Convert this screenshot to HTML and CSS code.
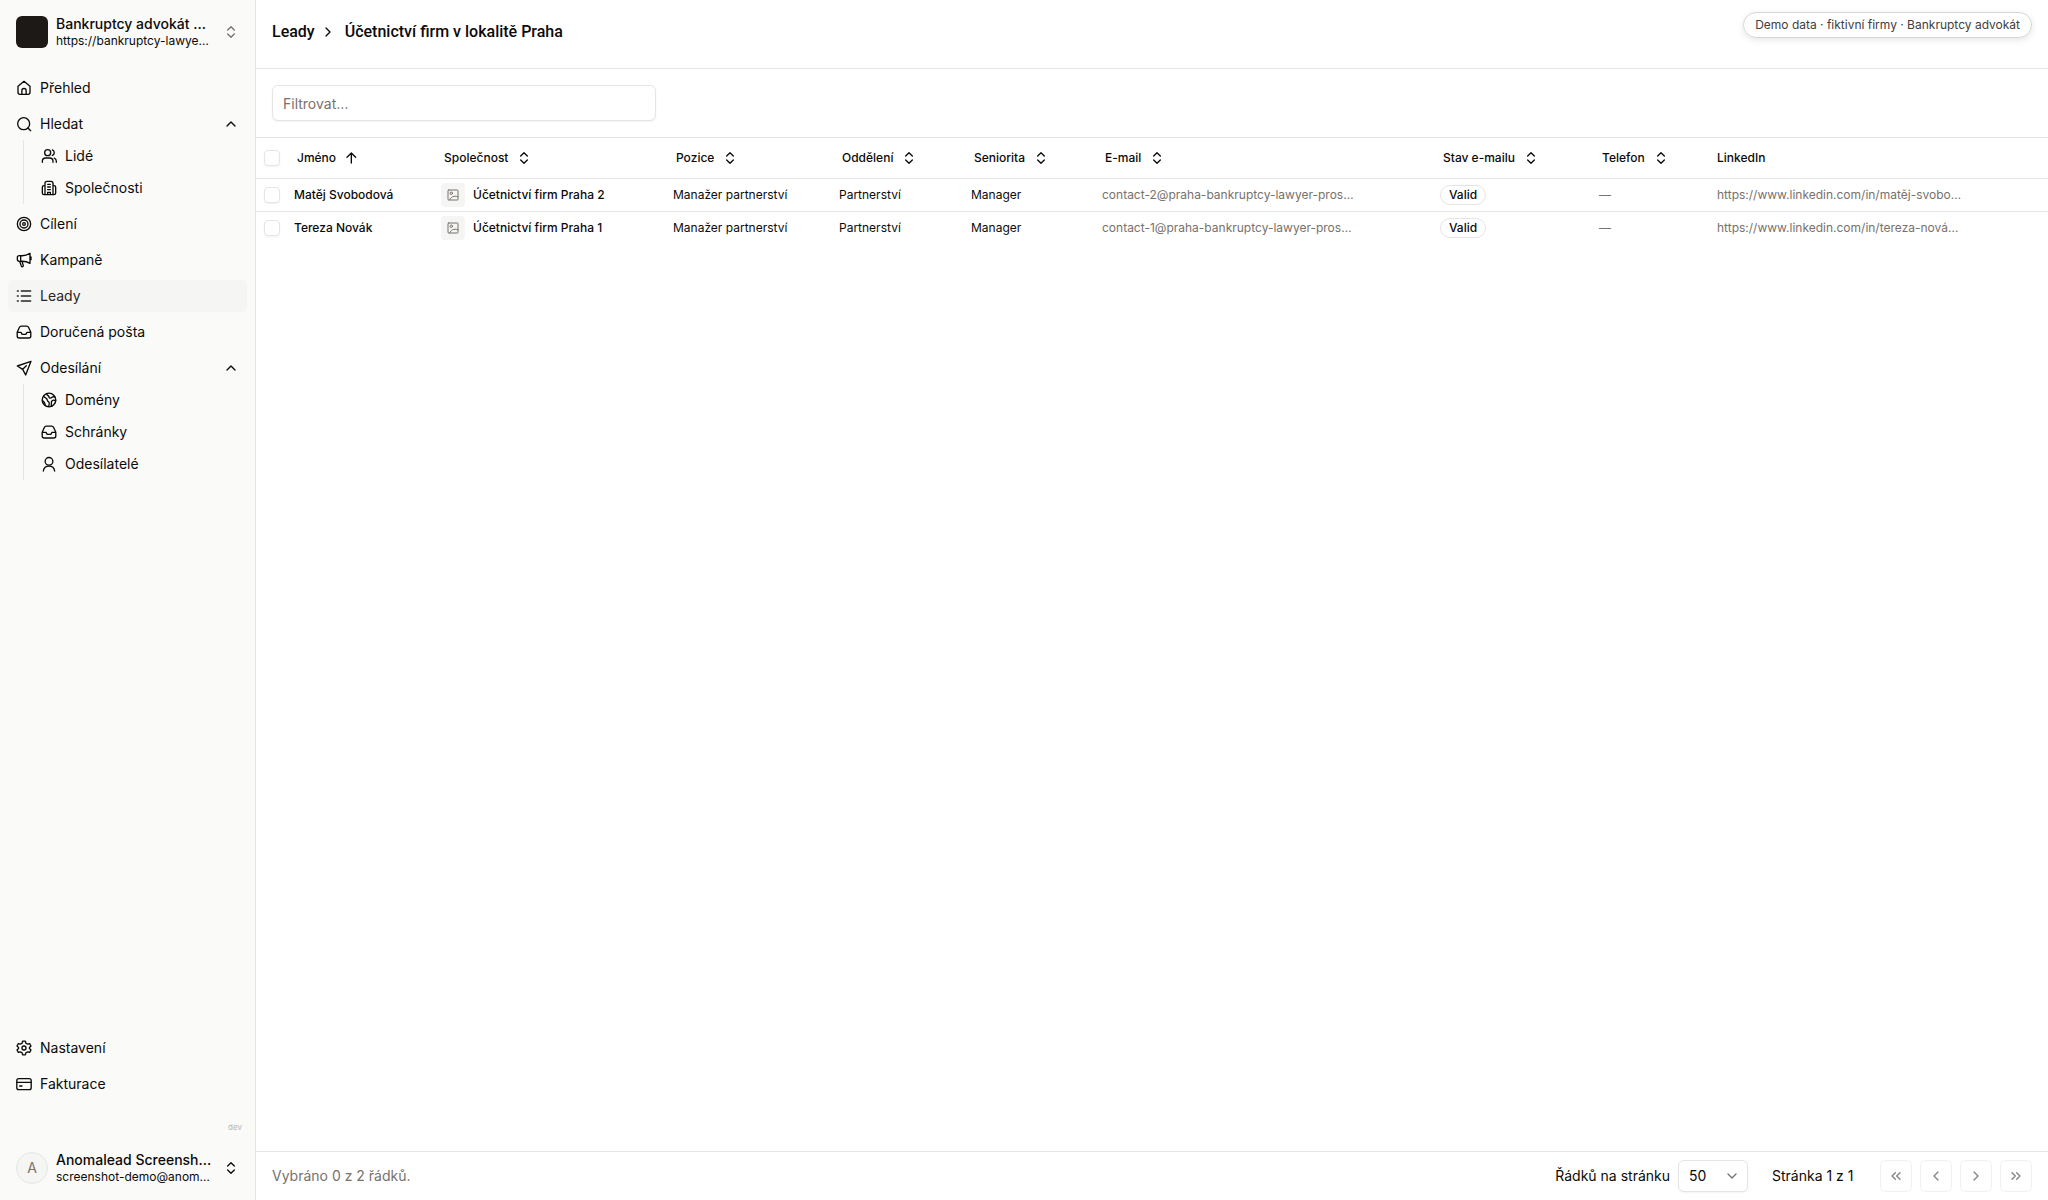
FILE: index.html
```html
<!DOCTYPE html>
<html lang="cs">
<head>
<meta charset="utf-8">
<meta name="viewport" content="width=device-width, initial-scale=1">
<title>Leady</title>
<link rel="stylesheet" href="styles.css">
</head>
<body>
<svg class="sprite" aria-hidden="true">
  <symbol id="home" viewBox="0 0 24 24"><path d="M3 9.500 12 2l9 7.500V18.500a3 3 0 0 1-3 3H6a3 3 0 0 1-3-3zM8.800 21.500V16a3.200 3.200 0 0 1 6.400 0v5.500"/></symbol>
  <symbol id="search" viewBox="0 0 24 24"><circle cx="11.500" cy="11.500" r="9"/><path d="m18 18 4 4"/></symbol>
  <symbol id="people" viewBox="0 0 24 24"><circle cx="10" cy="7" r="4.500"/><path d="M2 21.500v-1.500a5 5 0 0 1 5-5h6a5 5 0 0 1 5 5v1.500M17 2.800a4.500 4.500 0 0 1 0 8.400M20 15.200a5 5 0 0 1 3 4.600v1.700"/></symbol>
  <symbol id="company" viewBox="0 0 24 24"><path d="M6 22V5a3 3 0 0 1 3-3h6a3 3 0 0 1 3 3v17M6 8.500H4.500A2.500 2.500 0 0 0 2 11v8.500A2.500 2.500 0 0 0 4.500 22h15a2.500 2.500 0 0 0 2.500-2.500V11a2.500 2.500 0 0 0-2.500-2.500H18M10 6.500h4M10 10.500h4M10 14.500h4M10 22v-3.500h4V22"/></symbol>
  <symbol id="target" viewBox="0 0 24 24"><circle cx="12" cy="12" r="10"/><circle cx="12" cy="12" r="6"/><circle cx="12" cy="12" r="2"/></symbol>
  <symbol id="megaphone" viewBox="0 0 24 24"><path d="M7 5.500c5 .5 10-1 14-3.500v15c-4-2.500-9-3.500-14-3H5a3 3 0 0 1-3-3V8.500a3 3 0 0 1 3-3zM7 5.500V14M5.500 14l2.500 7c.4 1 1.200 1.300 2 1s1.200-1 .9-2L9 14M22.500 7.500v4"/></symbol>
  <symbol id="list" viewBox="0 0 24 24"><path d="M8 4.500h14M8 12h14M8 19.500h14M2 4.500h1.500M2 12h1.500M2 19.500h1.500"/></symbol>
  <symbol id="inbox" viewBox="0 0 24 24"><path d="M1.800 12.500 5.200 5a3 3 0 0 1 2.700-1.700h8.200A3 3 0 0 1 18.800 5l3.400 7.500V18a3 3 0 0 1-3 3H4.800a3 3 0 0 1-3-3zM2 12.500h5.500l1.800 3h5.400l1.800-3H22"/></symbol>
  <symbol id="send" viewBox="0 0 24 24"><path d="M22.500 2 2 9l8 5 4.500 8.500zM10 14l5.500-5.500"/></symbol>
  <symbol id="globe" viewBox="0 0 24 24"><circle cx="12" cy="12" r="10.200"/><path d="M4 6c1 3 3 2.500 4.500 4s.5 3.500 2.500 4.500 1.500 4 .5 7M8.500 2.500c0 2.500 3 2.500 3.500 5s3 2 4.500.5 2.500-1 4-.5M22 13c-2-1-5-1-6 1s0 2.500-.5 4.500.5 2.500 1 2.500M2 13.500c2 0 2.500 1 3.500 3S6 20 6 20"/></symbol>
  <symbol id="person" viewBox="0 0 24 24"><circle cx="12" cy="8" r="5.800"/><path d="M3.500 22.500a8.600 8.600 0 0 1 17 0"/></symbol>
  <symbol id="gear" viewBox="0 0 24 24"><path d="M10 1.800h4l.9 3.100 2.500 1.400 3.100-.8 2 3.500-2.300 2.200v1.600l2.300 2.200-2 3.500-3.100-.8-2.500 1.400-.9 3.100h-4l-.9-3.100-2.500-1.400-3.100.8-2-3.500 2.300-2.200v-1.600L1.500 9l2-3.500 3.100.8 2.500-1.400z"/><circle cx="12" cy="12" r="3"/></symbol>
  <symbol id="card" viewBox="0 0 24 24"><rect x="1.200" y="4" width="21.600" height="16.500" rx="3"/><path d="M1.500 9.500h21M5.500 15H9"/></symbol>
  <symbol id="up" viewBox="0 0 24 24"><path d="m6 15 6-6 6 6"/></symbol>
  <symbol id="down" viewBox="0 0 24 24"><path d="m6 9 6 6 6-6"/></symbol>
  <symbol id="right" viewBox="0 0 24 24"><path d="m9 18 6-6-6-6"/></symbol>
  <symbol id="left" viewBox="0 0 24 24"><path d="m15 18-6-6 6-6"/></symbol>
  <symbol id="first" viewBox="0 0 24 24"><path d="m11 17-5-5 5-5M18 17l-5-5 5-5"/></symbol>
  <symbol id="last" viewBox="0 0 24 24"><path d="m6 17 5-5-5-5M13 17l5-5-5-5"/></symbol>
  <symbol id="sort" viewBox="0 0 24 24"><path d="m7 15 5 5 5-5M7 9l5-5 5 5"/></symbol>
  <symbol id="asc" viewBox="0 0 24 24"><path d="M11 19.500V5M4.500 11 11 4.500l6.500 6.500"/></symbol>
  <symbol id="image" viewBox="0 0 24 24"><rect x="2" y="2" width="20" height="20" rx="1.500"/><circle cx="8.500" cy="8.500" r="2.500"/><path d="M5 22c3-6 8-9.500 17-6.500"/></symbol>
</svg>
<div class="app">
  <aside class="sidebar">
    <button class="account account-top" type="button">
      <span class="logo"></span>
      <span class="account-text"><strong>Bankruptcy advokát …</strong><small>https://bankruptcy-lawye…</small></span>
      <svg class="icon muted"><use href="#sort"/></svg>
    </button>
    <nav class="nav">
      <a class="item" href="#"><svg class="icon"><use href="#home"/></svg>Přehled</a>
      <div>
        <button class="item" type="button"><svg class="icon"><use href="#search"/></svg><span class="grow">Hledat</span><svg class="icon"><use href="#up"/></svg></button>
        <div class="sub">
          <a class="item" href="#"><svg class="icon"><use href="#people"/></svg>Lidé</a>
          <a class="item" href="#"><svg class="icon"><use href="#company"/></svg>Společnosti</a>
        </div>
      </div>
      <a class="item" href="#"><svg class="icon"><use href="#target"/></svg>Cílení</a>
      <a class="item" href="#"><svg class="icon"><use href="#megaphone"/></svg>Kampaně</a>
      <a class="item active" href="#" aria-current="page"><svg class="icon"><use href="#list"/></svg>Leady</a>
      <a class="item" href="#"><svg class="icon"><use href="#inbox"/></svg>Doručená pošta</a>
      <div>
        <button class="item" type="button"><svg class="icon"><use href="#send"/></svg><span class="grow">Odesílání</span><svg class="icon"><use href="#up"/></svg></button>
        <div class="sub">
          <a class="item" href="#"><svg class="icon"><use href="#globe"/></svg>Domény</a>
          <a class="item" href="#"><svg class="icon"><use href="#inbox"/></svg>Schránky</a>
          <a class="item" href="#"><svg class="icon"><use href="#person"/></svg>Odesílatelé</a>
        </div>
      </div>
    </nav>
    <nav class="nav nav-bottom">
      <a class="item" href="#"><svg class="icon"><use href="#gear"/></svg>Nastavení</a>
      <a class="item" href="#"><svg class="icon"><use href="#card"/></svg>Fakturace</a>
    </nav>
    <p class="version">dev</p>
    <button class="account" type="button">
      <span class="avatar">A</span>
      <span class="account-text"><strong>Anomalead Screensh…</strong><small>screenshot-demo@anom…</small></span>
      <svg class="icon"><use href="#sort"/></svg>
    </button>
  </aside>

  <main class="main">
    <header class="topbar">
      <nav class="crumbs">
        <a href="#">Leady</a>
        <svg class="icon"><use href="#right"/></svg>
        <h1>Účetnictví firm v lokalitě Praha</h1>
      </nav>
      <span class="demo">Demo data · fiktivní firmy · Bankruptcy advokát</span>
    </header>
    <div class="filter"><input class="field" type="text" placeholder="Filtrovat…" aria-label="Filtrovat"></div>
    <div class="table-area">
      <table class="leads">
        <colgroup><col class="c-check"><col class="c-name"><col class="c-company"><col class="c-role"><col class="c-dept"><col class="c-level"><col class="c-email"><col class="c-status"><col class="c-phone"><col></colgroup>
        <thead>
          <tr>
            <th><input class="tick" type="checkbox" aria-label="Vybrat vše"></th>
            <th><button class="sort" type="button">Jméno<svg class="icon"><use href="#asc"/></svg></button></th>
            <th><button class="sort" type="button">Společnost<svg class="icon"><use href="#sort"/></svg></button></th>
            <th><button class="sort" type="button">Pozice<svg class="icon"><use href="#sort"/></svg></button></th>
            <th><button class="sort" type="button">Oddělení<svg class="icon"><use href="#sort"/></svg></button></th>
            <th><button class="sort" type="button">Seniorita<svg class="icon"><use href="#sort"/></svg></button></th>
            <th><button class="sort" type="button">E-mail<svg class="icon"><use href="#sort"/></svg></button></th>
            <th><button class="sort" type="button">Stav e-mailu<svg class="icon"><use href="#sort"/></svg></button></th>
            <th><button class="sort" type="button">Telefon<svg class="icon"><use href="#sort"/></svg></button></th>
            <th>LinkedIn</th>
          </tr>
        </thead>
        <tbody>
          <tr>
            <td><input class="tick" type="checkbox" aria-label="Vybrat Matěj Svobodová"></td>
            <td class="strong">Matěj Svobodová</td>
            <td><span class="company"><span class="thumb"><svg><use href="#image"/></svg></span>Účetnictví firm Praha 2</span></td>
            <td>Manažer partnerství</td>
            <td>Partnerství</td>
            <td>Manager</td>
            <td class="muted">contact-2@praha-bankruptcy-lawyer-pros…</td>
            <td><span class="badge">Valid</span></td>
            <td class="muted">—</td>
            <td><a class="muted" href="#">https://www.linkedin.com/in/matěj-svobo…</a></td>
          </tr>
          <tr>
            <td><input class="tick" type="checkbox" aria-label="Vybrat Tereza Novák"></td>
            <td class="strong">Tereza Novák</td>
            <td><span class="company"><span class="thumb"><svg><use href="#image"/></svg></span>Účetnictví firm Praha 1</span></td>
            <td>Manažer partnerství</td>
            <td>Partnerství</td>
            <td>Manager</td>
            <td class="muted">contact-1@praha-bankruptcy-lawyer-pros…</td>
            <td><span class="badge">Valid</span></td>
            <td class="muted">—</td>
            <td><a class="muted" href="#">https://www.linkedin.com/in/tereza-nová…</a></td>
          </tr>
        </tbody>
      </table>
    </div>
    <footer class="pager">
      <span class="muted grow">Vybráno 0 z 2 řádků.</span>
      <label for="rows">Řádků na stránku</label>
      <span class="select"><select id="rows"><option>50</option></select><svg class="icon muted"><use href="#down"/></svg></span>
      <span class="page">Stránka 1 z 1</span>
      <div class="steps">
        <button type="button" disabled aria-label="První stránka"><svg class="icon"><use href="#first"/></svg></button>
        <button type="button" disabled aria-label="Předchozí stránka"><svg class="icon"><use href="#left"/></svg></button>
        <button type="button" disabled aria-label="Další stránka"><svg class="icon"><use href="#right"/></svg></button>
        <button type="button" disabled aria-label="Poslední stránka"><svg class="icon"><use href="#last"/></svg></button>
      </div>
    </footer>
  </main>
</div>
</body>
</html>
```
FILE: styles.css
```css
:root {
  --ink: #0c0a09;
  --muted: #78716c;
  --line: #e5e5e5;
  --soft: #f5f5f4;
}

* { box-sizing: border-box; }

body {
  margin: 0;
  font: 400 14px/20px Inter, "Liberation Sans", sans-serif;
  color: var(--ink);
  background: #fff;
}

button, input, select { font: inherit; color: inherit; }
button { border: 0; background: none; padding: 0; text-align: left; }
a { color: inherit; text-decoration: none; }
.sprite { display: none; }
.grow { flex: 1; }
.muted, a.muted { color: var(--muted); }

.icon {
  width: 16px;
  height: 16px;
  flex: none;
}

svg {
  fill: none;
  stroke: currentColor;
  stroke-width: 2;
  stroke-linecap: round;
  stroke-linejoin: round;
}

.app {
  display: grid;
  grid-template-columns: 256px minmax(0, 1fr);
  min-height: 100vh;
}

/* Sidebar */
.sidebar {
  display: flex;
  flex-direction: column;
  padding: 8px;
  background: #fafaf9;
  border-right: 1px solid var(--line);
}

.account {
  display: flex;
  align-items: center;
  gap: 8px;
  height: 48px;
  padding: 8px;
}

.account-top { margin-bottom: 16px; }

.logo, .avatar {
  width: 32px;
  height: 32px;
  flex: none;
  border-radius: 6px;
  background: #1c1917;
}

.avatar {
  display: grid;
  place-items: center;
  border: 1px solid var(--line);
  border-radius: 50%;
  background: var(--soft);
  color: var(--muted);
}

.account-text {
  display: grid;
  flex: 1;
  min-width: 0;
  white-space: nowrap;
}

.account-text strong { font-weight: 500; line-height: 18px; }
.account-text small { font-size: 12px; line-height: 16px; }

.nav {
  display: flex;
  flex-direction: column;
  gap: 4px;
}

.nav-bottom { margin-top: auto; }

.item {
  display: flex;
  align-items: center;
  gap: 8px;
  width: 100%;
  height: 32px;
  padding: 0 8px;
  border-radius: 6px;
}

.item.active { background: var(--soft); color: #292524; }

.sub {
  margin-left: 15px;
  padding-left: 9px;
  border-left: 1px solid var(--line);
}

.version {
  margin: 20px 5px 10px;
  font-size: 8px;
  line-height: 14px;
  text-align: right;
  color: #b8b4b0;
}

/* Main column */
.main {
  display: flex;
  flex-direction: column;
  min-width: 0;
}

.topbar {
  display: flex;
  align-items: flex-start;
  justify-content: space-between;
  padding: 12px 16px 16px;
  border-bottom: 1px solid var(--line);
}

.crumbs {
  display: flex;
  align-items: center;
  gap: 5px;
  height: 40px;
  font: 500 16px/24px Roboto, "Liberation Sans", sans-serif;
}

.crumbs h1 { margin: 0 0 0 4px; font: inherit; }

.demo {
  padding: 4px 11px;
  border: 1px solid #d6d6d6;
  border-radius: 999px;
  font-size: 12px;
  line-height: 16px;
  color: #404040;
  box-shadow: 0 2px 6px rgb(0 0 0 / 10%);
}

.filter {
  padding: 16px;
  border-bottom: 1px solid var(--line);
}

.field {
  display: block;
  width: 100%;
  max-width: 384px;
  height: 36px;
  padding: 0 10px;
  border: 1px solid var(--line);
  border-radius: 6px;
  box-shadow: 0 1px 2px rgb(0 0 0 / 5%);
}

.field::placeholder { color: var(--muted); opacity: 1; }

.table-area { flex: 1; }

.leads {
  width: 100%;
  table-layout: fixed;
  border-collapse: collapse;
  font-size: 12px;
  line-height: 16px;
  white-space: nowrap;
}

.c-check { width: 30px; }
.c-name { width: 147px; }
.c-company { width: 232px; }
.c-role { width: 166px; }
.c-dept { width: 132px; }
.c-level { width: 131px; }
.c-email { width: 338px; }
.c-status { width: 159px; }
.c-phone { width: 118px; }

.leads th {
  height: 40px;
  padding: 0 8px;
  text-align: left;
  font-weight: 500;
}

.leads td { height: 33px; padding: 0 8px; }
.leads tr { border-bottom: 1px solid var(--line); }
.leads tbody tr:last-child { border-bottom: 0; }
.strong, .company { font-weight: 500; }

.sort {
  display: flex;
  align-items: center;
  gap: 8px;
  padding-left: 3px;
}

.tick {
  display: block;
  width: 16px;
  height: 16px;
  margin: 0;
  appearance: none;
  border: 1px solid var(--line);
  border-radius: 4px;
  background: #fff;
  box-shadow: 0 1px 2px rgb(0 0 0 / 5%);
}

.company {
  display: flex;
  align-items: center;
  gap: 8px;
}

.thumb {
  display: grid;
  place-items: center;
  width: 24px;
  height: 24px;
  border-radius: 4px;
  background: var(--soft);
  color: var(--muted);
}

.thumb svg { width: 12px; height: 12px; }

.badge {
  display: inline-block;
  padding: 1px 8px;
  border: 1px solid var(--line);
  border-radius: 999px;
  font-weight: 500;
}

/* Pagination */
.pager {
  display: flex;
  align-items: center;
  height: 49px;
  padding: 0 16px;
  border-top: 1px solid var(--line);
}

.select {
  display: grid;
  align-items: center;
  margin: 0 24px 0 8px;
}

.select > * { grid-area: 1 / 1; }
.select .icon { justify-self: end; margin-right: 8px; pointer-events: none; }

.select select {
  width: 70px;
  height: 32px;
  padding: 0 10px;
  appearance: none;
  border: 1px solid var(--line);
  border-radius: 6px;
  background: #fff;
  box-shadow: 0 1px 2px rgb(0 0 0 / 5%);
}

.page { min-width: 84px; }

.steps {
  display: flex;
  gap: 8px;
  margin-left: 24px;
}

.steps button {
  display: grid;
  place-items: center;
  width: 32px;
  height: 32px;
  border: 1px solid var(--line);
  border-radius: 6px;
  opacity: .5;
}
```
